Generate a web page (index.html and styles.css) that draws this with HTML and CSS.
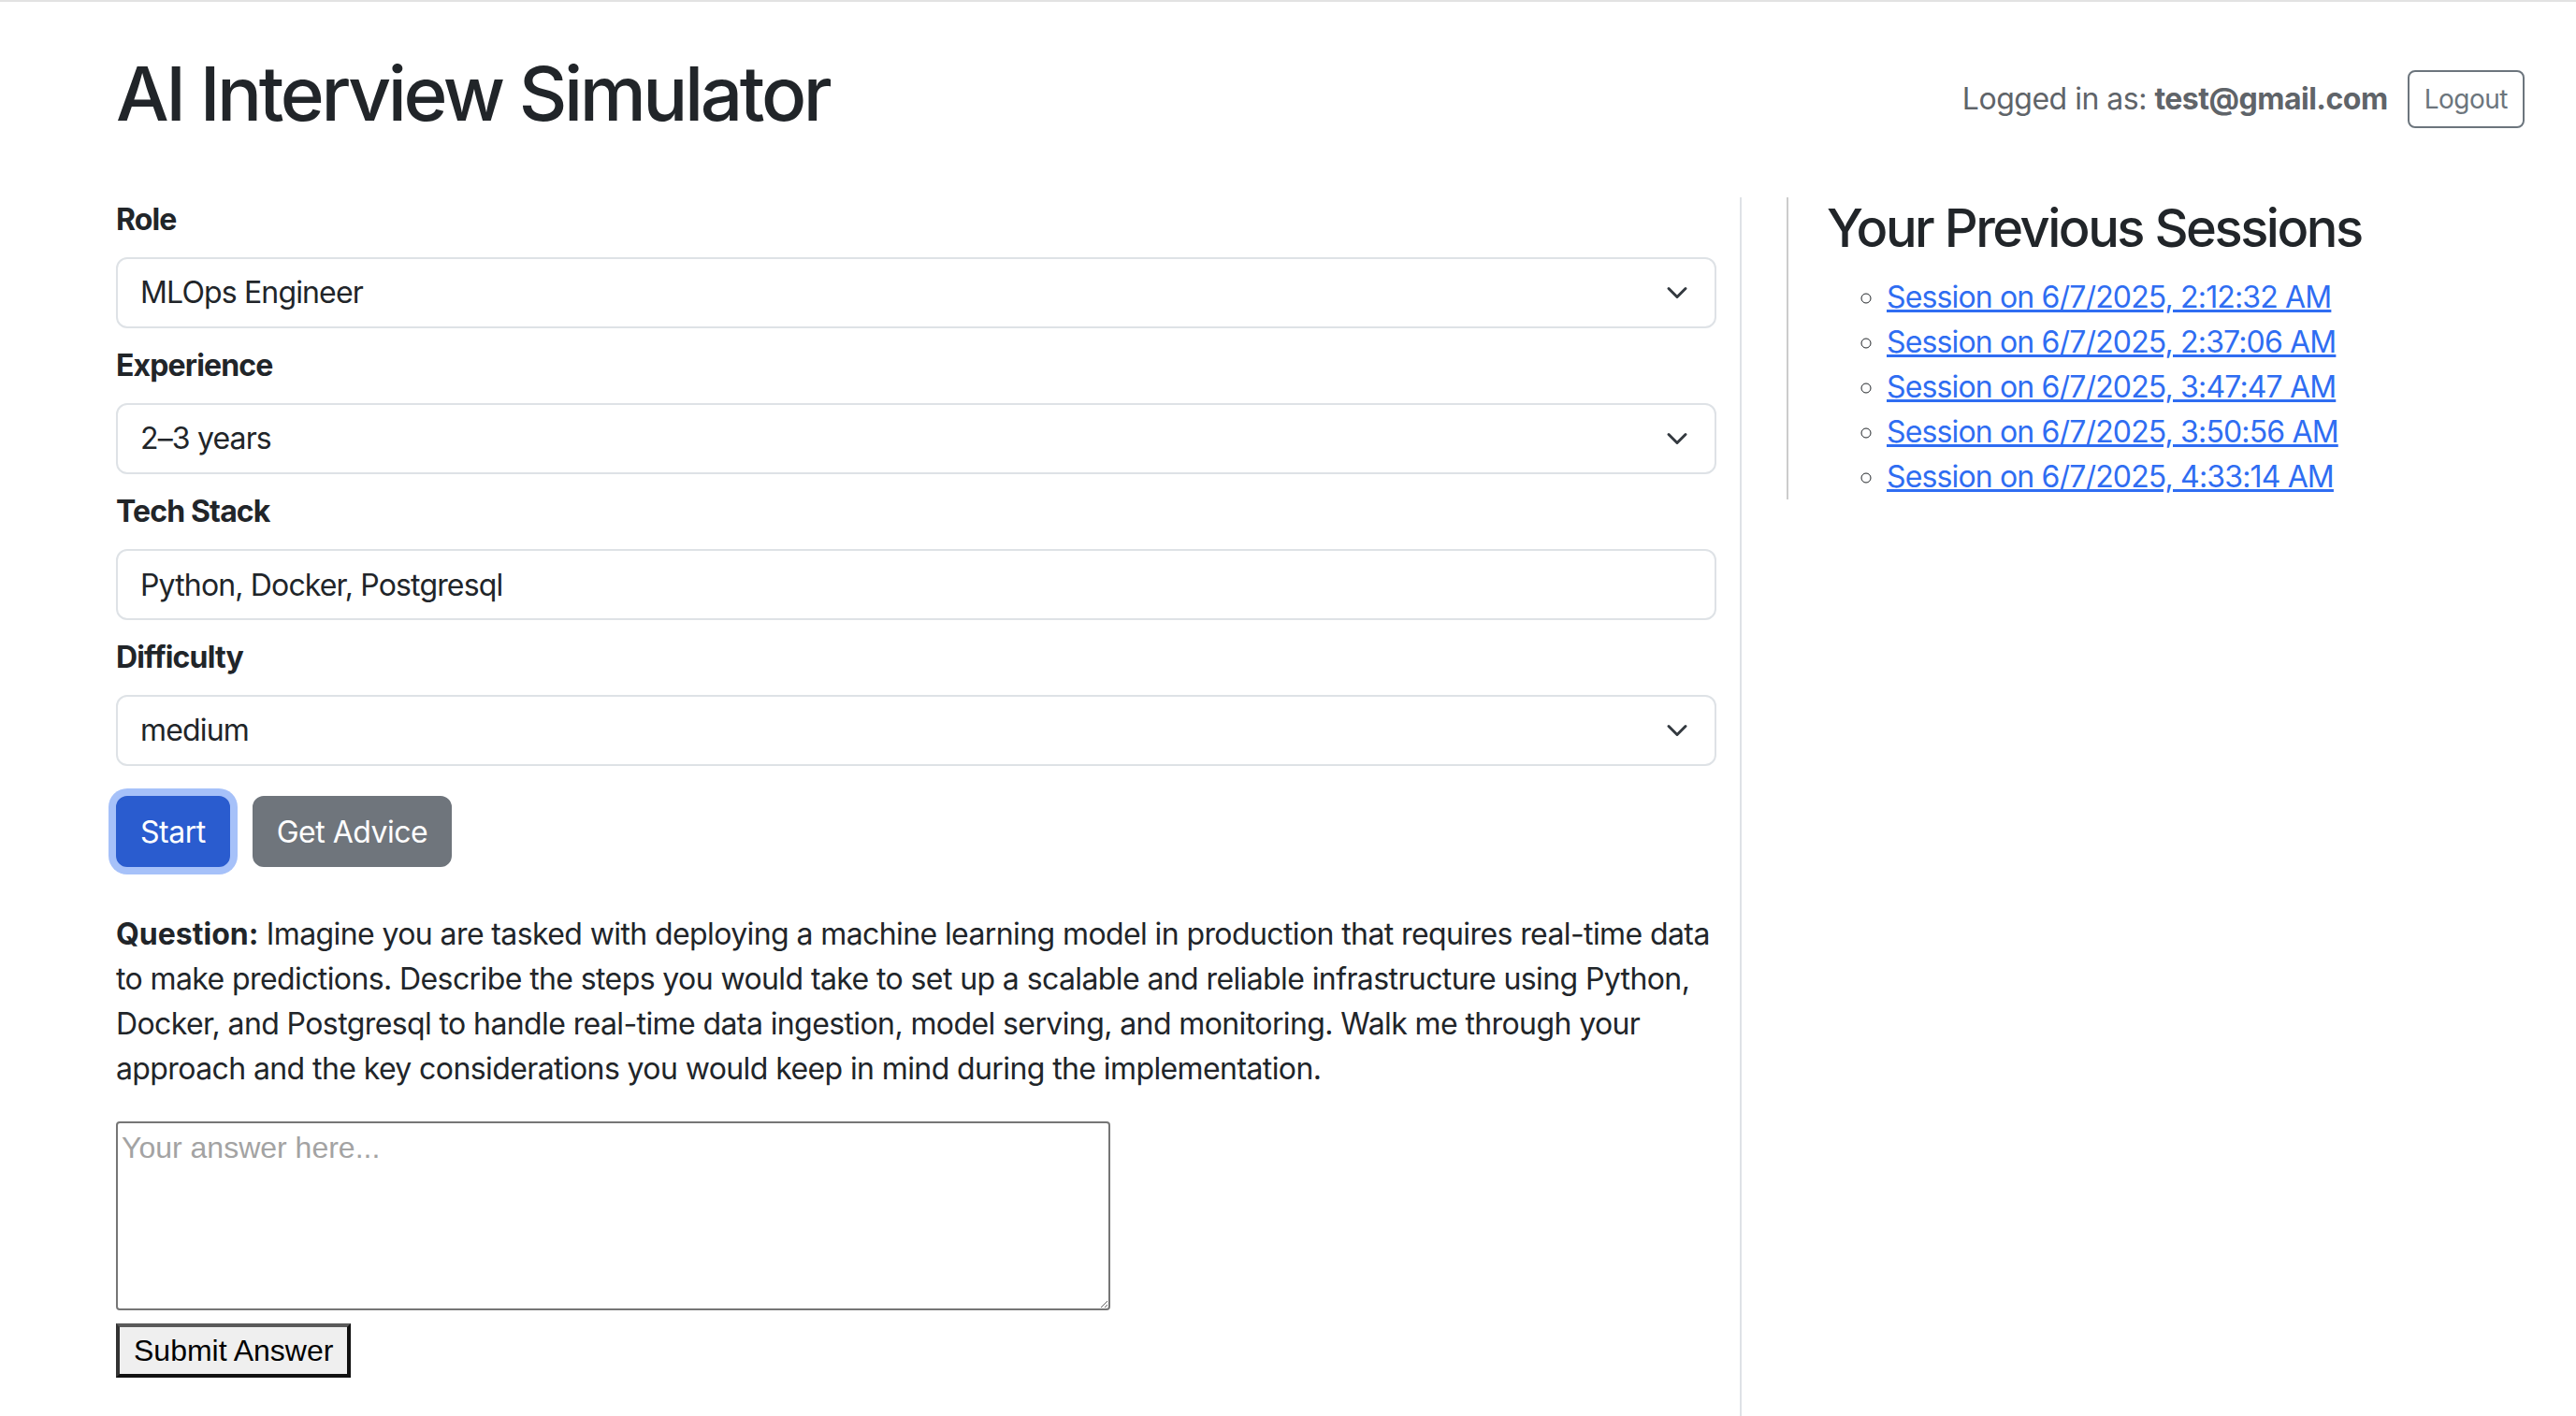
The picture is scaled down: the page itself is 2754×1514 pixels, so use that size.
FILE: index.html
```html
<!DOCTYPE html>
<html lang="en">
<head>
<meta charset="utf-8">
<title>AI Interview Simulator</title>
<link rel="stylesheet" href="styles.css">
</head>
<body>
<header class="topbar">
  <h1 class="title">AI Interview Simulator</h1>
  <div class="user">
    <span class="user-text">Logged in as: <strong>test@gmail.com</strong></span>
    <button class="btn-logout" type="button">Logout</button>
  </div>
</header>
<div class="layout">
  <main class="left">
    <div class="field">
      <label class="field-label">Role</label>
      <div class="form-select"><span>MLOps Engineer</span><svg class="chev" viewBox="0 0 16 16"><path d="m2 5 6 6 6-6"/></svg></div>
    </div>
    <div class="field">
      <label class="field-label">Experience</label>
      <div class="form-select"><span>2–3 years</span><svg class="chev" viewBox="0 0 16 16"><path d="m2 5 6 6 6-6"/></svg></div>
    </div>
    <div class="field">
      <label class="field-label">Tech Stack</label>
      <input class="form-control" type="text" value="Python, Docker, Postgresql">
    </div>
    <div class="field">
      <label class="field-label">Difficulty</label>
      <div class="form-select"><span>medium</span><svg class="chev" viewBox="0 0 16 16"><path d="m2 5 6 6 6-6"/></svg></div>
    </div>
    <div class="actions">
      <button class="btn btn-primary" type="button">Start</button>
      <button class="btn btn-secondary" type="button">Get Advice</button>
    </div>
    <p class="question"><strong>Question:</strong> Imagine you are tasked with deploying a machine learning model in production that requires real-time data to make predictions. Describe the steps you would take to set up a scalable and reliable infrastructure using Python, Docker, and Postgresql to handle real-time data ingestion, model serving, and monitoring. Walk me through your approach and the key considerations you would keep in mind during the implementation.</p>
    <textarea class="answer" placeholder="Your answer here..."></textarea>
    <button class="btn-submit" type="button">Submit Answer</button>
  </main>
  <aside class="right">
    <div class="sessions">
      <h3 class="sessions-title">Your Previous Sessions</h3>
      <ul class="session-list">
        <li><a href="#">Session on 6/7/2025, 2:12:32 AM</a></li>
        <li><a href="#">Session on 6/7/2025, 2:37:06 AM</a></li>
        <li><a href="#">Session on 6/7/2025, 3:47:47 AM</a></li>
        <li><a href="#">Session on 6/7/2025, 3:50:56 AM</a></li>
        <li><a href="#">Session on 6/7/2025, 4:33:14 AM</a></li>
      </ul>
    </div>
  </aside>
</div>
</body>
</html>
```
FILE: styles.css
```css
html, body {
  margin: 0;
  padding: 0;
  background: #ffffff;
}
body {
  font-family: Inter, "Noto Sans", sans-serif;
  font-size: 32px;
  line-height: 1.5;
  letter-spacing: -0.85px;
  color: #212529;
  border-top: 2px solid #e2e2e2;
  overflow: hidden;
}
.topbar {
  display: flex;
  justify-content: space-between;
  align-items: center;
  padding: 50px 55px 0 124px;
  margin-bottom: 51px;
}
.title {
  font-size: 80px;
  font-weight: 500;
  line-height: 1.2;
  margin: 0 0 12px;
  letter-spacing: -3.4px;
}
.user {
  display: flex;
  align-items: center;
  gap: 21px;
}
.user-text {
  color: #5f6469;
  letter-spacing: -0.5px;
}
.user-text strong {
  font-weight: 700;
}
.btn-logout {
  font-family: inherit;
  font-size: 28px;
  line-height: 42px;
  padding: 8px 16px;
  color: #6c757d;
  background: #fff;
  border: 2px solid #6c757d;
  border-radius: 8px;
  letter-spacing: -0.5px;
}
.layout {
  display: flex;
  padding-left: 124px;
}
.left {
  width: 1711px;
  flex: none;
  padding-right: 25px;
  border-right: 2px solid #dee2e6;
  min-height: 1400px;
}
.right {
  padding-left: 48px;
}
.sessions {
  border-left: 2px solid #cccccc;
  padding-left: 41px;
}
.field {
  margin-bottom: 16px;
}
.field-label {
  display: block;
  font-weight: 700;
  line-height: 48px;
  margin-bottom: 16px;
}
.form-select,
.form-control {
  box-sizing: border-box;
  width: 100%;
  height: 76px;
  border: 2px solid #dee2e6;
  border-radius: 12px;
  background: #fff;
  font-family: inherit;
  font-size: 32px;
  letter-spacing: -0.85px;
  color: #212529;
}
.form-select {
  display: flex;
  align-items: center;
  justify-content: space-between;
  padding: 0 28px 0 24px;
}
.form-control {
  display: block;
  padding: 0 24px;
  outline: none;
}
.chev {
  width: 24px;
  height: 24px;
  fill: none;
  stroke: #343a40;
  stroke-width: 2;
  stroke-linecap: round;
  stroke-linejoin: round;
}
.actions {
  display: flex;
  gap: 24px;
  margin: 32px 0 48px;
}
.btn {
  height: 76px;
  box-sizing: border-box;
  padding: 0 24px;
  font-family: inherit;
  font-size: 32px;
  letter-spacing: -0.5px;
  color: #fff;
  border: 2px solid transparent;
  border-radius: 12px;
}
.btn-primary {
  background: #2a5ccf;
  border-color: #2a5ccf;
  box-shadow: 0 0 0 8px #a6c1f9;
}
.btn-secondary {
  background: #6f757c;
  border-color: #6f757c;
}
.question {
  margin: 0 0 32px;
  line-height: 48px;
  letter-spacing: -0.6px;
}
.question strong {
  font-weight: 700;
  letter-spacing: 0;
}
.answer {
  display: block;
  box-sizing: border-box;
  width: 1063px;
  height: 202px;
  margin: 0 0 14px;
  padding: 8px 4px 4px;
  border: 2px solid #767676;
  border-radius: 4px;
  font-family: "Liberation Sans", Arial, sans-serif;
  font-size: 32px;
  line-height: 1.15;
  letter-spacing: 0;
  color: #000;
  resize: vertical;
}
.answer::placeholder {
  color: #a3a3a3;
}
.btn-submit {
  display: block;
  box-sizing: border-box;
  height: 58px;
  padding: 0 15px;
  font-family: "Liberation Sans", Arial, sans-serif;
  font-size: 32px;
  letter-spacing: 0;
  color: #000;
  background: #efefef;
  border-style: solid;
  border-width: 4px;
  border-color: #5a5a5a #111111 #111111 #333333;
}
.sessions-title {
  font-size: 56px;
  font-weight: 500;
  line-height: 1.2;
  margin: 0 0 16px;
  letter-spacing: -2.5px;
}
.session-list {
  margin: 0;
  padding-left: 64px;
  list-style: circle;
}
.session-list li {
  line-height: 48px;
}
.session-list a {
  color: #2f6df2;
  text-decoration: underline;
}
```
